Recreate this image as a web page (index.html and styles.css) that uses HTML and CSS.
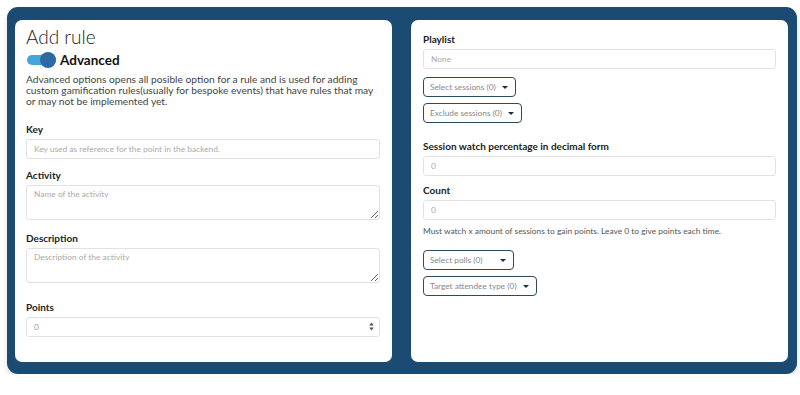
FILE: index.html
```html
<!DOCTYPE html>
<html lang="en">
<head>
	<meta charset="UTF-8">
	<title>Add rule</title>
	<link rel="stylesheet" href="styles.css">
</head>
<body>
	<div class="frame">
		<div class="card card-left">
			<h1>Add rule</h1>
			<div class="switchRow">
				<span class="switch"><span class="knob"></span></span>
				<strong>Advanced</strong>
			</div>
			<p class="intro">Advanced options opens all posible option for a rule and is used for adding custom gamification rules(usually for bespoke events) that have rules that may or may not be implemented yet.</p>

			<label class="lbl lbl-first">Key</label>
			<input type="text" class="f-text" placeholder="Key used as reference for the point in the backend.">

			<label class="lbl">Activity</label>
			<textarea class="f-text f-area" placeholder="Name of the activity"></textarea>

			<label class="lbl lbl-desc">Description</label>
			<textarea class="f-text f-area" placeholder="Description of the activity"></textarea>

			<label class="lbl lbl-points">Points</label>
			<div class="f-text f-num">
				<span>0</span>
				<svg width="5" height="9" viewBox="0 0 5 9"><path d="M2.5 0.5 L4.8 3.5 L0.2 3.5 Z M2.5 8.5 L4.8 5.5 L0.2 5.5 Z" fill="#555"/></svg>
			</div>
		</div>

		<div class="card card-right">
			<label class="lbl lbl-top">Playlist</label>
			<input type="text" class="f-text" placeholder="None">

			<button class="pick pick-first">Select sessions (0) <i class="caret"></i></button>
			<button class="pick">Exclude sessions (0) <i class="caret"></i></button>

			<label class="lbl lbl-watch">Session watch percentage in decimal form</label>
			<input type="text" class="f-text" placeholder="0">

			<label class="lbl lbl-count">Count</label>
			<input type="text" class="f-text" placeholder="0">
			<p class="hint">Must watch x amount of sessions to gain points. Leave 0 to give points each time.</p>

			<button class="pick pick-polls">Select polls (0) <i class="caret"></i></button>
			<button class="pick">Target attendee type (0) <i class="caret"></i></button>
		</div>
	</div>
</body>
</html>
```

FILE: styles.css
```css
/*reset*/
*{
	margin: 0;
	padding: 0;
	box-sizing: border-box;
}
body{
	background-color: #fff;
	font-family: Lato, "Liberation Sans", sans-serif;
	color: #222;
}
/*frame*/
.frame{
	display: grid;
	grid-template-columns: 377px 377px;
	column-gap: 19px;
	width: 790px;
	height: 367px;
	margin: 7px 0 0 7px;
	padding: 13px 9px 12px 8px;
	border-radius: 11px;
	background-color: #1b4a72;
	box-shadow: 0 4px 6px rgba(0,0,0,.12);
}
.card{
	display: flex;
	flex-direction: column;
	align-items: flex-start;
	background-color: #fff;
	border-radius: 7px;
	padding: 5px 12px 0 11px;
}
.card-right{
	padding: 12px 12px 0 12px;
}
h1{
	font-size: 19px;
	font-weight: 300;
	line-height: 24px;
	color: #222;
}
/*switch*/
.switchRow{
	display: flex;
	align-items: center;
	height: 17px;
	margin-top: 2px;
}
.switch{
	position: relative;
	width: 29px;
	height: 10px;
	margin-left: 1px;
	border-radius: 5px;
	background-color: #45a6dc;
}
.knob{
	position: absolute;
	top: -3px;
	right: 0;
	width: 16px;
	height: 16px;
	border-radius: 50%;
	background-color: #2d6aa5;
}
.switchRow strong{
	margin-left: 4px;
	font-size: 13.5px;
	font-weight: 700;
	color: #111;
}
.intro{
	margin-top: 6px;
	font-size: 10.2px;
	line-height: 11.2px;
	color: #444;
}
/*fields*/
.lbl{
	display: block;
	margin-top: 9px;
	margin-bottom: 3px;
	font-size: 10px;
	font-weight: 700;
	line-height: 14px;
	color: #222;
}
.lbl-first{
	margin-top: 14px;
}
.lbl-desc{
	margin-top: 11px;
}
.lbl-points{
	margin-top: 17px;
}
.lbl-top{
	margin-top: 0;
}
.lbl-watch{
	margin-top: 16px;
}
.lbl-count{
	margin-top: 7px;
}
.f-text{
	display: block;
	width: 100%;
	height: 20px;
	padding: 0 7px;
	border: 1px solid #e2e2e2;
	border-radius: 3px;
	font-family: inherit;
	font-size: 8.4px;
	color: #999;
	outline: none;
}
.f-text::placeholder{
	color: #aaa;
}
.f-area{
	height: 35px;
	padding-top: 3px;
	resize: vertical;
}
.f-num{
	display: flex;
	align-items: center;
	justify-content: space-between;
	padding-right: 5px;
}
/*pickers*/
.pick{
	display: flex;
	align-items: center;
	height: 20px;
	margin-top: 6px;
	padding: 0 7px 0 6px;
	border: 1.3px solid #2f4a5e;
	border-radius: 4px;
	background-color: #fff;
	font-family: inherit;
	font-size: 8.3px;
	color: #888;
}
.pick-first{
	margin-top: 8px;
}
.pick-polls{
	width: 91px;
	margin-top: 12px;
	justify-content: space-between;
}
.caret{
	display: inline-block;
	margin-left: 6px;
	width: 0;
	height: 0;
	border-left: 3px solid transparent;
	border-right: 3px solid transparent;
	border-top: 3.5px solid #1e2d3a;
}
.hint{
	margin-top: 4px;
	font-size: 8.4px;
	line-height: 14px;
	color: #555;
}
```
